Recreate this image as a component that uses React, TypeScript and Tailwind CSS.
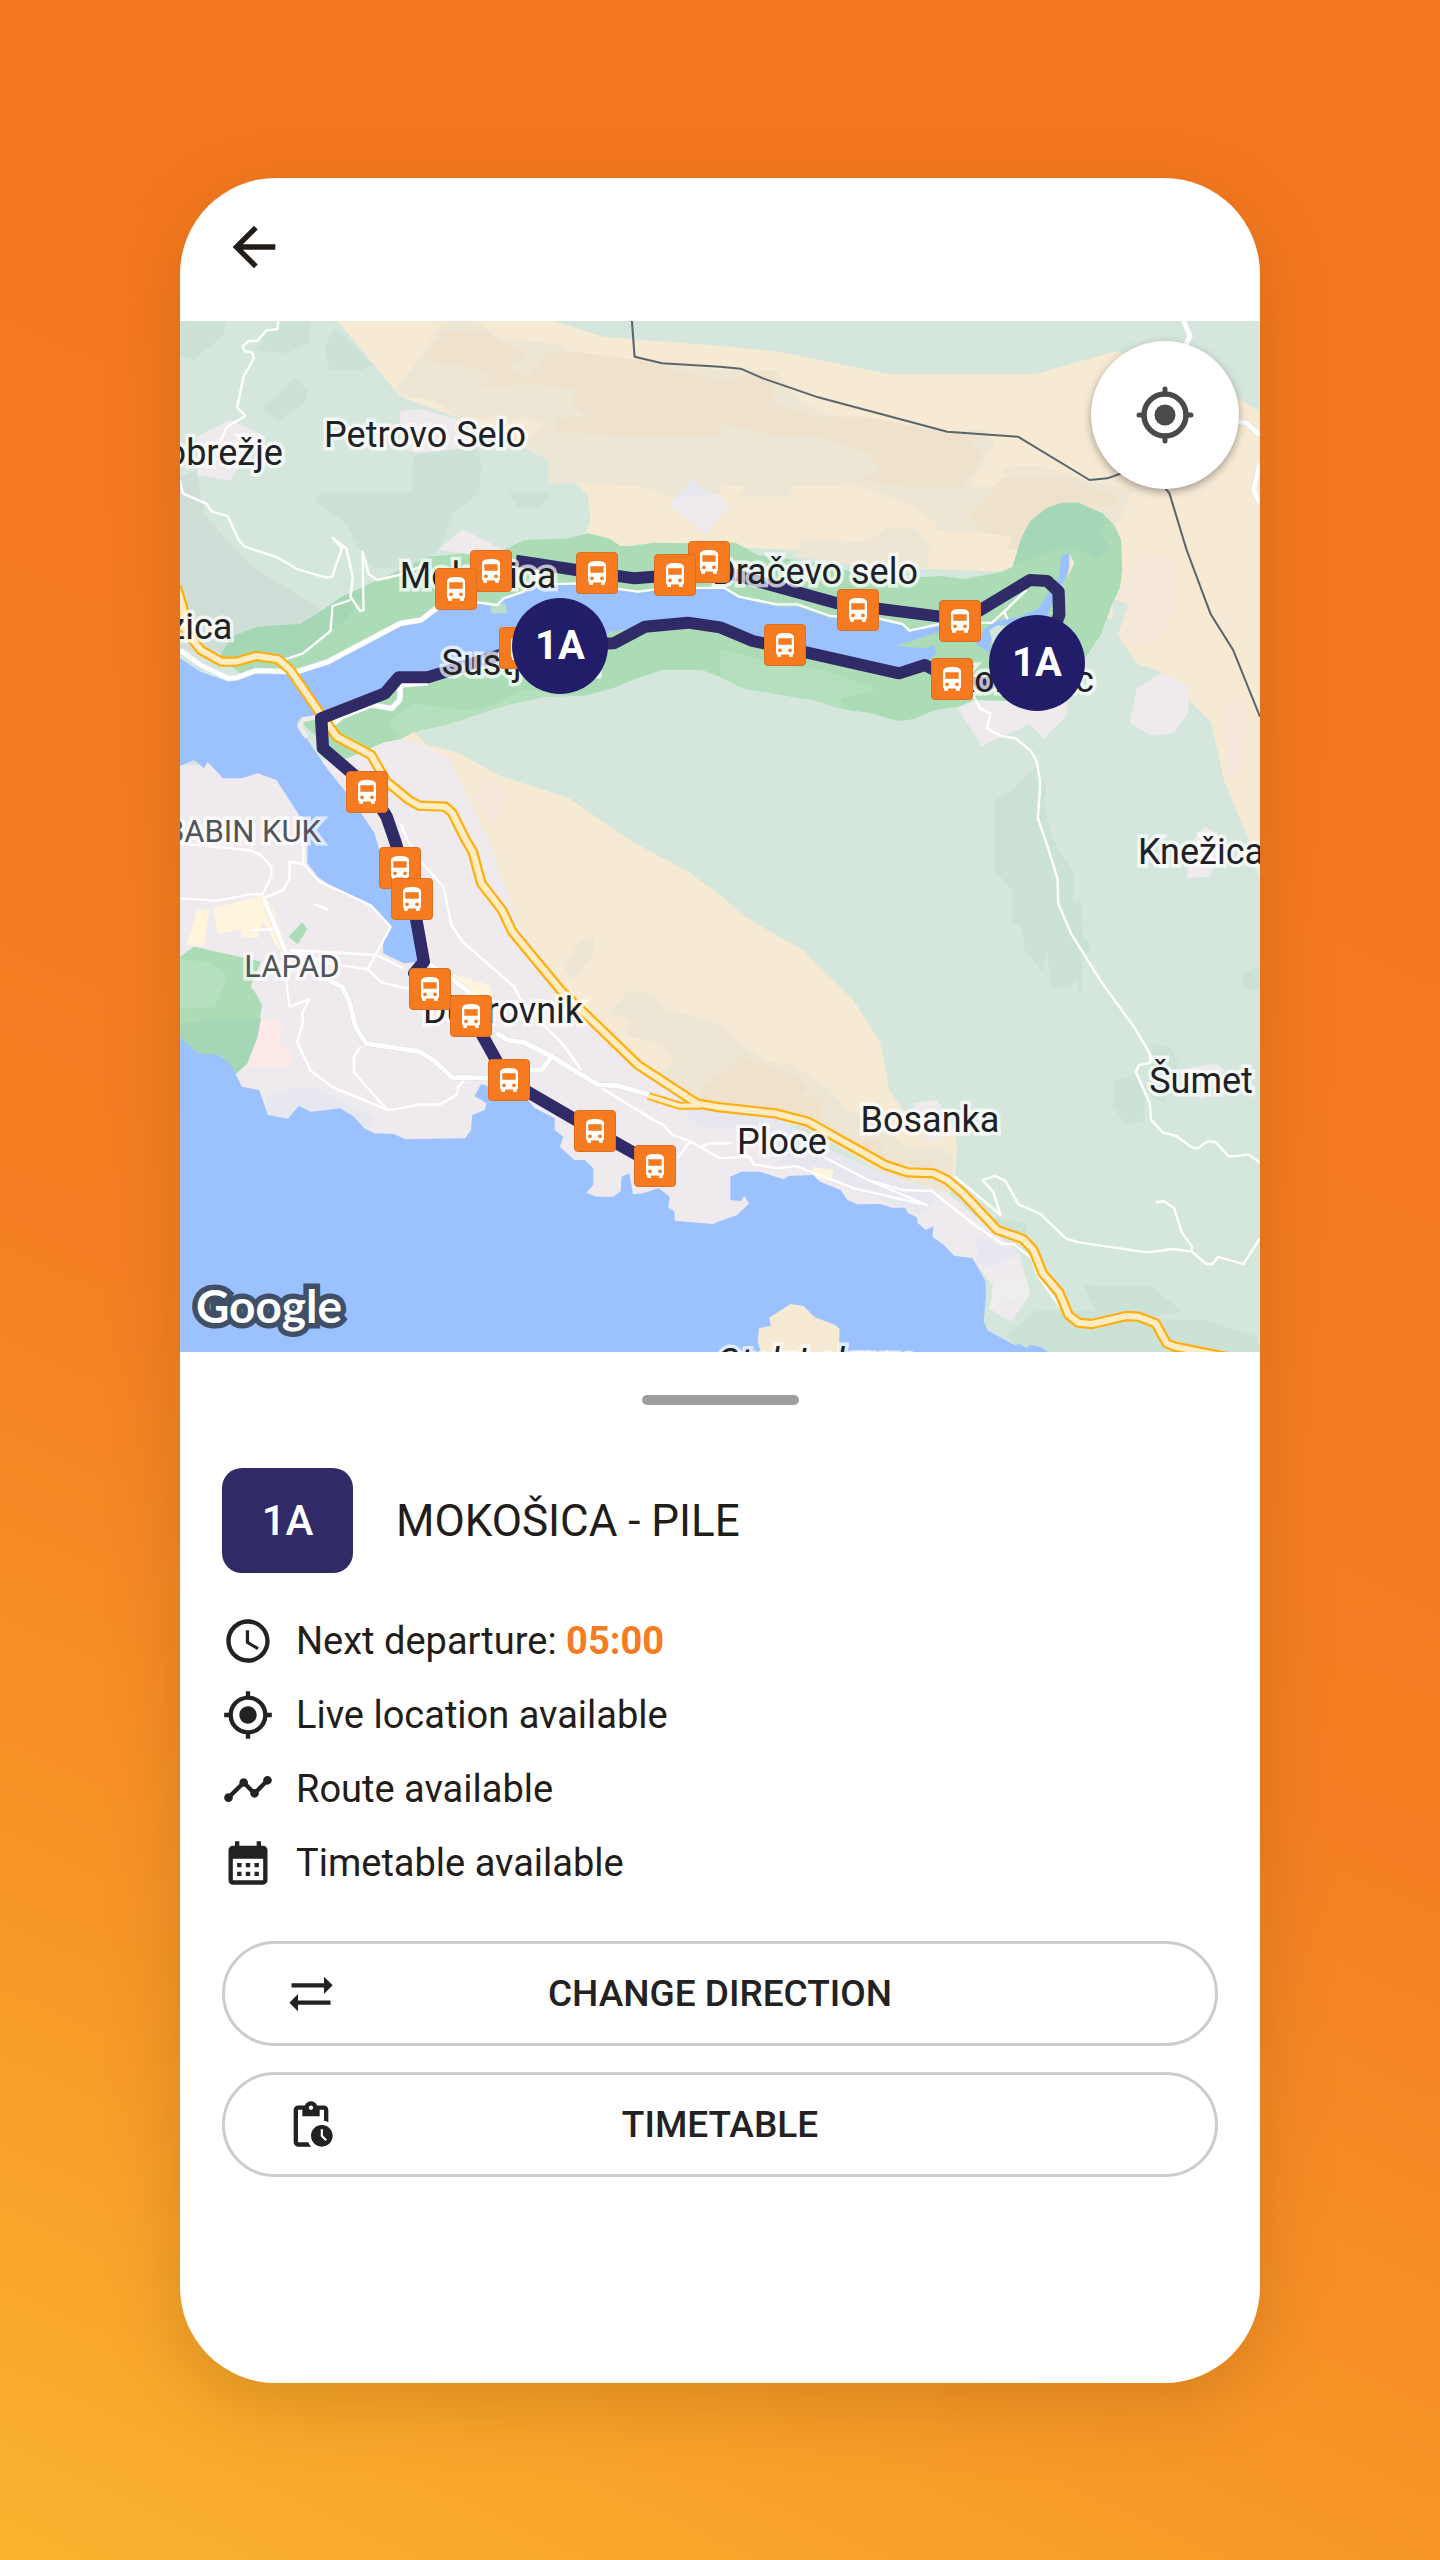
import {
  MdAccessTime,
  MdArrowBack,
  MdCalendarMonth,
  MdMyLocation,
  MdOutlinePendingActions,
  MdSyncAlt,
  MdTimeline,
} from "react-icons/md";

const MAP_W = 1080;
const MAP_H = 1031;
const pct = (v: number, total: number) => `${(v / total) * 100}%`;

type Shape = { fill: string; points: string };

const LAND: Shape[] = [
  { fill: "#cde2d6", points: "0,0 130,0 130,40 40,120 0,110" },
  { fill: "#cde2d6", points: "230,45 305,0 375,0 375,70 310,100 215,90 240,65" },
  { fill: "#cde2d6", points: "420,80 450,20 560,135 530,152 435,152" },
  { fill: "#cde2d6", points: "240,265 335,170 370,215 365,245 283,303" },
  { fill: "#cde2d6", points: "390,545 410,515 675,515 675,420 700,385 865,385 875,430 870,520 795,575 750,690 690,740 560,745 520,685 480,610" },
  { fill: "#cde2d6", points: "955,515 1080,515 1045,565 985,565" },
  { fill: "#cfdfd7", points: "0,470 50,450 70,585 215,745 415,870 350,915 220,920 120,1000 0,990" },
  // dry highlands in the north and east
  { fill: "#f7ead5", points: "455,0 1075,0 1230,50 1568,78 1738,95 2058,162 2483,162 2713,95 2800,105 3076,235 3140,280 3140,1700 3103,1560 3033,1385 2993,1205 2848,1055 2778,1030 2723,945 2753,855 2708,835 2708,900 2418,740 2378,755 2118,745 1998,700 1568,680 1475,670 1375,668 1310,678 1280,678 1175,640 1192,605 1185,525 1085,425 1000,385 800,290 640,230 560,130" },
  { fill: "#ede6d4", points: "630,200 700,110 765,0 860,0 920,50 1100,75 1160,110 1310,118 1400,130 1568,150 1728,150 1800,240 1900,290 2000,290 2220,335 2330,330 2373,370 2290,500 2400,500 2390,435 2500,440 2620,475 2768,510 2728,600 2640,680 2480,600 2300,640 2190,630 2200,610 2140,570 2130,555 1960,495 1768,500 1780,530 1620,530 1640,500 1568,495 1568,530 1420,530 1340,500 1180,490 1070,490 1070,420 1000,385 1050,310 1000,295 975,300 810,295 740,240 640,230" },
  { fill: "#efe2cc", points: "705,120 765,35 880,30 1005,105 960,140 1010,180 1060,100 1150,95 1310,118 1568,180 1728,150 1720,250 1850,290 2000,290 2220,340 2280,340 2330,410 2270,500 2100,500 1980,480 2030,450 2000,400 1850,350 1740,350 1568,310 1568,345 1250,345 1090,335 1090,295 1180,290 1140,250 1150,205 1020,195 870,200 910,160 770,130" },
  { fill: "#efe2cc", points: "2288,590 2388,475 2578,475 2723,530 2728,555 2618,570 2540,680 2403,690 2413,650 2338,640" },
  { fill: "#f7ead5", points: "2290,500 2380,345 2480,420 2430,440 2380,440 2350,500" },
  { fill: "#ede6d4", points: "1788,710 1808,660 1998,665 2048,625 2138,625 2176,680 2168,745 1998,740" },
  { fill: "#d5e7dc", points: "1990,745 2118,745 2378,755 2390,790 1990,790" },
  { fill: "#f5e8db", points: "2723,830 2778,720 2838,705 2878,720 2898,810 2868,920 2808,980 2733,970 2753,855" },
  { fill: "#f5e8db", points: "3035,1150 3095,1145 3085,1360 3035,1370" },
  // forest
  { fill: "#cde2d6", points: "2366,1440 2418,1410 2483,1340 2513,1390 2513,1480 2536,1560 2593,1660 2593,1750 2615,1735 2623,1855 2645,1878 2620,1930 2616,2035 2603,1970 2583,2005 2528,2005 2518,1895 2506,1957 2453,1890 2443,1820 2416,1805 2416,1710 2365,1650" },
  { fill: "#cde2d6", points: "2713,2280 2773,2263 2803,2330 2796,2405 2746,2417 2708,2355" },
  { fill: "#cde2d6", points: "2820,2170 2878,2182 2898,2230 2858,2350 2818,2330" },
  { fill: "#cde2d6", points: "3088,1960 3140,1935 3140,2010 3086,2005" },
  { fill: "#cde2d6", points: "2398,3050 2483,2972 2658,2972 2623,2895 2823,2897 2908,2975 2778,3000 2978,3000 3128,3050 3140,3100 2460,3100" },
  { fill: "#cde2d6", points: "2300,2680 2463,2712 2453,2745 2390,2750" },
  // villages
  { fill: "#efeaee", points: "640,272 700,268 810,300 875,380 690,400 640,385" },
  { fill: "#efeaee", points: "50,350 145,298 250,350 200,390 145,483 50,465" },
  { fill: "#e6e7ef", points: "1420,555 1485,478 1590,560 1527,643" },
  { fill: "#efeaee", points: "1420,555 1470,525 1568,525 1590,560 1527,643" },
  { fill: "#efeaee", points: "2778,1105 2853,1058 2928,1100 2928,1180 2886,1238 2823,1248 2758,1208" },
  { fill: "#efeaee", points: "2948,1550 2978,1520 3028,1560 3003,1640 2988,1670 2923,1675" },
  { fill: "#efeaee", points: "2898,2250 3008,2230 3033,2250 2968,2340" },
  // lagoon green belt
  { fill: "#acdcb6", points: "115,1010 150,950 225,920 350,912 415,870 470,830 720,710 780,705 940,690 1000,660 1130,655 1185,640 1245,655 1280,678 1310,678 1375,668 1475,670 1613,668 1678,705 1898,735 1968,765 2098,775 2208,768 2278,777 2388,755 2418,740 2443,655 2468,605 2518,563 2563,548 2608,548 2678,580 2713,615 2733,660 2736,750 2730,800 2708,850 2673,945 2628,1015 2578,1100 2508,1150 2388,1155 2308,1140 2258,1160 2193,1170 2128,1198 2083,1203 2008,1180 1938,1170 1838,1140 1778,1130 1633,1105 1568,1070 1515,1050 1400,1050 1300,1085 1270,1100 1175,1127 1060,1130 950,1155 830,1195 770,1215 700,1230 640,1258 590,1268 480,1318 440,1290 360,1215" },
  { fill: "#a5d6b5", points: "115,1010 150,950 225,920 350,912 415,870 470,830 560,790 480,900 430,935 357,1000 280,1020" },
  { fill: "#a5d6b7", points: "2418,740 2443,655 2468,605 2518,563 2563,548 2608,548 2678,580 2690,610 2670,640 2700,680 2660,720 2600,680 2540,690 2440,725" },
  { fill: "#b5e0bd", points: "610,1200 680,1150 860,1175 1000,1110 1175,1127 1060,1130 950,1155 830,1195 770,1215 700,1230 640,1258 605,1210" },
  { fill: "#b5e0bd", points: "1568,990 1700,1020 1900,1060 2020,1110 1920,1135 1920,1168 1838,1140 1778,1130 1633,1105 1568,1070" },
  { fill: "#efeaee", points: "750,688 820,627 940,690 850,705" },
  { fill: "#efeaee", points: "2258,1165 2308,1140 2578,1150 2573,1190 2508,1255 2465,1213 2328,1278" },
  // dry slope above the city
  { fill: "#f7ead5", points: "680,1235 715,1272 810,1300 930,1368 1130,1435 1305,1560 1475,1655 1568,1725 1643,1792 1808,1890 1953,2038 2033,2165 2061,2315 2098,2365 2128,2410 2248,2440 2256,2475 2251,2570 2233,2630 2038,2560 1818,2420 1568,2380 1500,2360 1330,2240 1165,2070 985,1820 895,1560 780,1315 640,1258" },
  { fill: "#ede6d4", points: "1240,2085 1305,2010 1380,2025 1405,2070 1500,2090 1568,2115 1643,2185 1713,2225 1778,2235 1883,2305 1938,2370 2033,2420 2108,2480 2208,2485 2248,2510 2233,2630 2038,2560 1728,2370 1568,2355 1500,2340 1380,2260 1435,2230 1400,2170 1300,2150 1305,2095" },
  { fill: "#efe2cc", points: "1520,2300 1568,2260 1633,2200 1653,2220 1783,2265 1823,2305 1798,2330 1866,2335 1866,2400 1948,2455 2033,2460 2043,2515 2188,2520 2193,2570 2108,2550 1818,2410 1568,2355 1510,2340" },
  { fill: "#ede6d4", points: "1113,1940 1160,1865 1202,1852 1202,1900 1143,1980" },
  { fill: "#f5e8db", points: "850,1430 900,1375 955,1430 910,1515" },
  // city
  { fill: "#efeaee", points: "0,1335 480,1318 590,1268 640,1258 700,1275 780,1315 830,1420 895,1560 985,1820 1165,2070 1330,2240 1500,2350 1568,2375 1738,2395 1868,2480 2038,2560 2230,2620 2438,2800 2468,2925 2413,3005 2348,2965 2368,2910 2300,2815 2000,2820 1568,2760 900,2520 0,2500" },
  { fill: "#e6e7ef", points: "1450,2360 1568,2375 1738,2395 1868,2480 2038,2560 2210,2620 2160,2685 2060,2650 1870,2560 1740,2530 1640,2430 1510,2420" },
  { fill: "#e6e7ef", points: "2300,2745 2440,2800 2360,2838 2310,2830 2318,2780" },
  { fill: "#eeeeef", points: "2363,2880 2460,2880 2468,2925 2440,2945 2400,2940 2352,2965" },
  { fill: "#efeaee", points: "2128,2350 2198,2340 2258,2440 2168,2465" },
  { fill: "#fff5dc", points: "1838,2540 1898,2550 1890,2582 1840,2572" },
  { fill: "#acdcb6", points: "0,1910 40,1880 235,1925 205,2000 220,2020 238,2055 225,2150 195,2230 162,2262 120,2207 80,2208 45,2198 0,2150" },
  { fill: "#b5e0bd", points: "0,1920 90,1925 140,1970 100,2060 0,2067" },
  { fill: "#a5d6b5", points: "0,2110 130,2098 235,2098 225,2150 195,2230 162,2262 120,2207 80,2208 45,2198 0,2150" },
  { fill: "#fde9e8", points: "238,2095 285,2100 298,2120 283,2170 322,2192 325,2238 197,2238 225,2155" },
  { fill: "#fff5dc", points: "97,1765 245,1725 270,1765 315,1890 285,1890 240,1800 225,1855 180,1850 175,1828 110,1842" },
  { fill: "#fff5dc", points: "50,1770 85,1768 70,1880 20,1875" },
  { fill: "#fff5dc", points: "780,1960 900,1995 910,2030 850,2030" },
  { fill: "#acdcb6", points: "315,1850 355,1807 370,1827 342,1873" },
  { fill: "#e6e7ef", points: "250,2330 340,2303 400,2303 565,2390 555,2420 530,2420 465,2365 380,2370 345,2357 310,2396 255,2385" },
];

const WATER = [
  // lagoon and harbour
  "0,1015 60,1055 140,1085 170,1078 220,1055 340,1058 430,1035 640,912 700,900 760,860 860,850 920,860 945,830 1000,815 1010,800 1150,793 1250,800 1330,820 1400,808 1588,805 1628,835 1733,860 1793,860 1888,895 2018,900 2098,915 2118,935 2208,915 2208,935 2078,978 2168,985 2188,975 2196,1000 2158,1040 2088,1060 1968,1050 1568,920 1470,905 1340,920 1250,935 1200,960 700,1090 640,1095 560,1150 440,1190 345,1195 340,1215 370,1260 430,1350 500,1440 565,1540 600,1670 690,1810 700,1925 650,1930 590,1900 590,1860 612,1820 560,1760 470,1720 400,1670 370,1630 370,1560 355,1500 280,1380 225,1360 180,1375 125,1375 80,1325 70,1345 40,1320 0,1338",
  // river head
  "2558,710 2583,697 2580,755 2533,850 2510,910 2390,915 2368,930 2353,970 2353,1000 2308,970 2333,930 2368,905 2438,890 2493,865 2553,770",
  // open sea
  "0,2150 50,2200 115,2205 150,2240 180,2300 230,2310 255,2385 313,2396 345,2357 380,2375 465,2365 505,2390 535,2425 565,2440 620,2442 655,2458 828,2455 845,2430 848,2385 885,2370 890,2350 855,2328 875,2292 1010,2340 1030,2365 1088,2395 1088,2430 1113,2450 1103,2480 1145,2520 1175,2520 1200,2545 1200,2595 1180,2618 1210,2630 1258,2630 1280,2613 1282,2570 1305,2560 1315,2623 1345,2620 1390,2605 1422,2630 1418,2663 1436,2675 1436,2702 1548,2712 1568,2703 1618,2685 1653,2650 1638,2628 1630,2643 1598,2640 1598,2570 1630,2555 1683,2555 1753,2578 1768,2568 1838,2565 1858,2585 1918,2610 1938,2640 1968,2653 2033,2652 2068,2663 2106,2663 2113,2678 2141,2693 2141,2708 2166,2730 2188,2718 2185,2750 2218,2775 2248,2807 2301,2815 2338,2882 2340,2925 2334,3005 2346,3032 2428,3077 2433,3070 2461,3085 2466,3075 2503,3082 2540,3110 0,3110",
];

const ISLAND = "1681,3025 1716,3017 1711,2993 1773,2952 1811,2958 1843,2992 1903,3015 1915,3027 1913,3110 1690,3110 1678,3065";

const MINOR_ROADS = [
  "285,0 283,27 250,32 225,62 200,63 182,78 187,93 208,97 215,115 185,168 166,262 190,288 135,322 115,370",
  "0,480 8,520 75,550 93,575 138,588 172,663 188,680 285,713 340,747 425,773 442,770 470,685 442,653 483,685 502,773 495,830 523,873 533,870 530,695 548,763 573,780 635,765 700,740",
  "300,1020 357,1000 437,933 443,858 495,840",
  "860,847 922,855 940,835 998,815 1010,795 1150,790 1330,815 1400,805 1580,803 1623,830 1733,853 1793,853 1888,888 2018,893 2098,912 2118,932 2208,912 2358,908 2393,875 2458,810",
  "2393,875 2403,898",
  "2303,1125 2323,1165 2353,1180 2343,1225 2383,1248 2426,1255 2473,1295 2488,1325 2498,1390 2491,1495 2513,1560 2548,1675 2550,1750 2588,1842 2678,1990 2773,2125 2818,2205 2818,2228 2783,2237 2776,2257 2816,2350 2820,2400 2853,2437 2893,2448 2938,2482 2953,2486 2983,2465 3006,2465 3046,2510 3103,2504 3136,2528",
  "2250,2570 2383,2685 2361,2615 2330,2580 2366,2568 2396,2582 2435,2653 2498,2682 2573,2756 2610,2767 2808,2797 2883,2787 2938,2795 2980,2832 2998,2832 3015,2811 3088,2832 3136,2755",
  "2833,2647 2856,2643 2886,2663 2908,2735 2938,2780 2938,2795",
  "1568,2515 1653,2510 1665,2533 1733,2545 1788,2538 1958,2605 2168,2655 1998,2580 1868,2510",
  "1998,2580 2098,2610 2183,2613 2308,2715 2386,2770 2421,2773 2473,2815 2493,2870 2558,2965",
  "1225,2305 1375,2400 1405,2415 1430,2445 1480,2463 1568,2515",
  "1445,2515 1480,2465",
  "1515,2480 1535,2470 1600,2470",
  "640,1510 660,1560 700,1625 765,1700 788,1815 820,1865 970,2000 1000,2060 1110,2170 1165,2250",
  "305,1890 310,2000 318,2060 375,2038 355,2078 357,2110 340,2165 380,2253 445,2302 600,2368 625,2368 697,2353 755,2353 803,2325 808,2300 825,2282",
  "525,2180 505,2210 505,2257 600,2368",
  "320,1890 570,1905 650,1945",
  "612,1820 545,1948 585,1987 665,2007",
  "545,1948 430,1930 320,1890",
  "0,1735 110,1742 205,1723 240,1723 265,1670 265,1640 235,1605 200,1590 0,1570",
  "240,1735 300,1710 318,1675 318,1625 358,1632 405,1685 480,1720 555,1757 612,1820",
  "358,1632 360,1560",
  "870,2135 920,2240",
  "390,1752 430,1768",
  "205,1830 270,1828",
];

const MAJOR_ROADS = [
  "0,990 60,1035 140,1075 165,1073 220,1052 340,1055 430,1025 640,910 700,900 750,860",
  "440,1215 470,1190 555,1155 615,1165 638,1140 640,1095 720,1088",
  "2913,0 2933,48 2918,80",
  "3073,305 3098,310 3136,345",
  "3136,430 3118,510 3136,550",
  "720,1930 780,1970 850,2025",
  "245,1740 305,1890",
  "420,1975 470,2000 490,2040 510,2120 540,2170 695,2195 735,2220 790,2272 895,2274",
  "920,2140 950,2160 1000,2168 1080,2210 1215,2295 1270,2297 1400,2335",
  "1080,2210 1050,2250 1015,2250",
];

const QUAY = "368,1252 348,1220 358,1198 395,1192";

const HIGHWAY =
  "-10,800 8,860 15,930 60,990 120,1025 163,1025 222,1008 285,1018 320,1050 400,1170 455,1250 555,1305 600,1385 665,1440 695,1457 770,1460 790,1478 830,1560 850,1595 875,1690 935,1770 965,1835 1105,2010 1330,2235 1500,2350 1568,2362 1728,2380 1823,2405 2048,2535 2113,2557 2188,2560 2228,2580 2273,2620 2373,2730 2448,2757 2478,2790 2505,2860 2553,2918 2580,2985 2608,3008 2648,3012 2748,2988 2783,2990 2833,3010 2865,3070 2888,3080 3060,3115";
const RAMP = "1360,2328 1450,2357 1510,2357";

const BORDERS = [
  "1312,0 1320,110 1400,130 1568,140 1628,146 1693,175 1853,232 2228,335 2433,350 2641,480 2693,475 2760,450 2861,505 2873,520 2923,690 2993,883 3058,990 3136,1190",
];

const ROUTE =
  "975,722 1150,750 1320,775 1440,765 1540,750 1613,765 1908,850 2208,890 2268,905 2468,780 2518,783 2551,815 2553,885 2518,980 2448,1085 2308,1090 2238,1075 2163,1035 2088,1060 1818,997 1663,963 1568,922 1475,908 1350,920 1260,970 1200,972 1100,975 930,1005 720,1072 635,1072 595,1120 410,1195 415,1285 545,1400 600,1490 625,1565 675,1735 708,1925 680,1960 725,2005 845,2085 950,2280 1200,2430 1380,2535";

type Place = { name: string; x: number; y: number; kind?: "district" | "island" };

const PLACES: Place[] = [
  { name: "Petrovo Selo", x: 245, y: 114 },
  { name: "Pobrežje", x: 33, y: 132 },
  { name: "Lozica", x: 0, y: 306 },
  { name: "Mokošica", x: 298, y: 255 },
  { name: "Sustjepan", x: 341, y: 342 },
  { name: "Dračevo selo", x: 635, y: 251 },
  { name: "Komolac", x: 843, y: 359 },
  { name: "Knežica", x: 1021, y: 531 },
  { name: "Šumet", x: 1021, y: 760 },
  { name: "Bosanka", x: 750, y: 799 },
  { name: "Ploce", x: 602, y: 821 },
  { name: "Dubrovnik", x: 323, y: 690 },
  { name: "BABIN KUK", x: 63, y: 511, kind: "district" },
  { name: "LAPAD", x: 112, y: 646, kind: "district" },
  { name: "Otok Lokrum", x: 636, y: 1041, kind: "island" },
];

const PLACE_STYLES = {
  town: "text-4xl text-[#202124]",
  district: "text-[31px] text-[#50555a]",
  island: "text-4xl text-[#202124] italic",
};

const STOPS = [
  [311, 250], [276, 268], [417, 252], [529, 241], [495, 254], [340, 327], [187, 471],
  [678, 289], [780, 300], [605, 324], [772, 358], [220, 547], [232, 578], [250, 668],
  [291, 695], [329, 759], [415, 810], [475, 845],
];

const VEHICLES = [
  [380, 325],
  [857, 342],
];

function Lines({ lines, stroke, width }: { lines: string[]; stroke: string; width: number }) {
  return (
    <g fill="none" stroke={stroke} strokeWidth={width} strokeLinejoin="round">
      {lines.map((points) => (
        <polyline key={points} points={points} />
      ))}
    </g>
  );
}

function MapDrawing() {
  return (
    <svg viewBox="0 3 3136 3093" preserveAspectRatio="none" className="block aspect-[1080/1031] w-full bg-[#d5e7dc]" aria-hidden="true">
      {LAND.map((s) => (
        <polygon key={s.points} points={s.points} fill={s.fill} />
      ))}
      {WATER.map((points) => (
        <polygon key={points} points={points} fill="#9cc1ff" />
      ))}
      <polygon points={ISLAND} fill="#f7ead5" />
      <polygon points="2350,930 2375,915 2410,925 2400,1000 2362,980" fill="#cfe6da" />
      <polygon points="2583,700 2597,730 2575,775 2582,740" fill="#f7ead5" />
      <polygon points="900,858 945,850 950,880 905,880" fill="#b9dfc6" />
      <Lines lines={[QUAY]} stroke="#efeaee" width={14} />
      <Lines lines={MINOR_ROADS} stroke="#ffffff" width={7} />
      <Lines lines={MAJOR_ROADS} stroke="#dfe1e8" width={18} />
      <Lines lines={MAJOR_ROADS} stroke="#ffffff" width={14} />
      <Lines lines={BORDERS} stroke="#5b656d" width={6} />
      <Lines lines={[HIGHWAY]} stroke="#ffae0c" width={31} />
      <Lines lines={[RAMP]} stroke="#ffae0c" width={24} />
      <Lines lines={[HIGHWAY]} stroke="#ffecc2" width={18} />
      <Lines lines={[RAMP]} stroke="#ffecc2" width={13} />
      <Lines lines={[ROUTE]} stroke="#302a66" width={36} />
    </svg>
  );
}

function BusIcon() {
  return (
    <svg viewBox="0 0 18 24" className="h-6 w-[18px]" aria-hidden="true">
      <path
        fill="#fff"
        fillRule="evenodd"
        d="M0 4.500C0 1.200 3.500 0 9 0s9 1.200 9 4.500V19.500c0 .9-.4 1.500-1.200 1.900V23c0 .6-.4 1-1 1h-1.800c-.6 0-1-.4-1-1v-1.500H5V23c0 .6-.4 1-1 1H2.200c-.6 0-1-.4-1-1v-1.600C.4 21 0 20.400 0 19.500zM2.300 5.200v6.600h13.400V5.200zM4 15.400a1.900 1.900 0 1 0 0 3.800 1.900 1.900 0 0 0 0-3.800zm10 0a1.900 1.900 0 1 0 0 3.800 1.900 1.900 0 0 0 0-3.800z"
      />
    </svg>
  );
}

function LocateIcon() {
  return (
    <svg viewBox="0 0 60 60" className="size-[60px]" fill="none" stroke="#4a4a4a" aria-hidden="true">
      <circle cx="30" cy="30" r="21" strokeWidth="5.500" />
      <circle cx="30" cy="30" r="10.500" fill="#4a4a4a" stroke="none" />
      <path d="M30 4v5M30 51v5M4 30h5M51 30h5" strokeWidth="5" strokeLinecap="round" />
    </svg>
  );
}

function RouteMap() {
  return (
    <section aria-label="Route map" className="relative overflow-hidden">
      <MapDrawing />
      {PLACES.map((p) => (
        <span
          key={p.name}
          className={`absolute -translate-x-1/2 -translate-y-1/2 leading-10 whitespace-nowrap [-webkit-text-stroke:7px_rgba(255,255,255,0.7)] [paint-order:stroke_fill] ${PLACE_STYLES[p.kind ?? "town"]}`}
          style={{ left: pct(p.x, MAP_W), top: pct(p.y, MAP_H) }}
        >
          {p.name}
        </span>
      ))}
      {STOPS.map(([x, y]) => (
        <span
          key={`${x}-${y}`}
          className="absolute flex size-[42px] -translate-x-1/2 -translate-y-1/2 items-center justify-center rounded border border-[#dd6e22] bg-[#f57a20]"
          style={{ left: pct(x, MAP_W), top: pct(y, MAP_H) }}
        >
          <BusIcon />
        </span>
      ))}
      {VEHICLES.map(([x, y]) => (
        <span
          key={`${x}-${y}`}
          className="absolute flex size-24 -translate-x-1/2 -translate-y-1/2 items-center justify-center rounded-full bg-[#221d69] text-[40px] leading-none font-bold text-white"
          style={{ left: pct(x, MAP_W), top: pct(y, MAP_H) }}
        >
          1A
        </span>
      ))}
      <button
        type="button"
        aria-label="Show my location"
        className="absolute top-5 right-[21px] flex size-[148px] items-center justify-center rounded-full bg-white shadow-[0_3px_8px_rgba(0,0,0,0.35)]"
      >
        <LocateIcon />
      </button>
      <span className="absolute bottom-[18px] left-4 font-['Lato'] text-[46px] leading-[56px] font-bold text-white [-webkit-text-stroke:11px_#3f4f68] [paint-order:stroke_fill]">
        Google
      </span>
    </section>
  );
}

const INFO = [
  { Icon: MdAccessTime, text: "Next departure:", value: "05:00" },
  { Icon: MdMyLocation, text: "Live location available" },
  { Icon: MdTimeline, text: "Route available" },
  { Icon: MdCalendarMonth, text: "Timetable available" },
];

const ACTIONS = [
  { Icon: MdSyncAlt, label: "CHANGE DIRECTION" },
  { Icon: MdOutlinePendingActions, label: "TIMETABLE" },
];

export default function App() {
  return (
    <div className="min-h-screen bg-[linear-gradient(25deg,#fab32f_0%,#f9a62b_10%,#f79728_20%,#f57f22_42%,#f5781f_75%)] px-[12.5%] pt-[178px] pb-[177px] font-['Roboto',sans-serif] text-[#221d19]">
      <main className="overflow-hidden rounded-[96px] bg-white pb-[206px] shadow-[0_20px_70px_rgba(120,70,0,0.25)]">
        <header className="flex h-[143px] items-center px-[42px]">
          <button type="button" aria-label="Back" className="-mt-1.5">
            <MdArrowBack className="size-16" />
          </button>
        </header>
        <RouteMap />
        <section className="flex flex-col px-[42px] pt-[43px]">
          <div className="h-2.5 w-[157px] self-center rounded-full bg-[#9e9e9e]" />
          <div className="mt-[63px] flex items-center gap-[43px]">
            <span className="flex h-[105px] w-[131px] items-center justify-center rounded-[20px] bg-[#302a66] text-[42px] leading-none font-medium text-white">
              1A
            </span>
            <h1 className="text-[44px] leading-none">MOKOŠICA - PILE</h1>
          </div>
          <ul className="mt-[42px] flex flex-col gap-[22px]">
            {INFO.map(({ Icon, text, value }) => (
              <li key={text} className="flex h-[52px] items-center gap-[22px] text-[38px] leading-none">
                <Icon className="size-[52px] text-[#222]" />
                <span>
                  {text}
                  {value && <strong className="font-bold text-[#f57c21]"> {value}</strong>}
                </span>
              </li>
            ))}
          </ul>
          <div className="mt-[52px] flex flex-col gap-[26px]">
            {ACTIONS.map(({ Icon, label }) => (
              <button
                key={label}
                type="button"
                className="relative flex h-[105px] items-center justify-center rounded-full border-[3px] border-[#ccc] text-[37px] font-medium text-[#222]"
              >
                <Icon className="absolute left-[60px] size-[52px]" />
                {label}
              </button>
            ))}
          </div>
        </section>
      </main>
    </div>
  );
}
